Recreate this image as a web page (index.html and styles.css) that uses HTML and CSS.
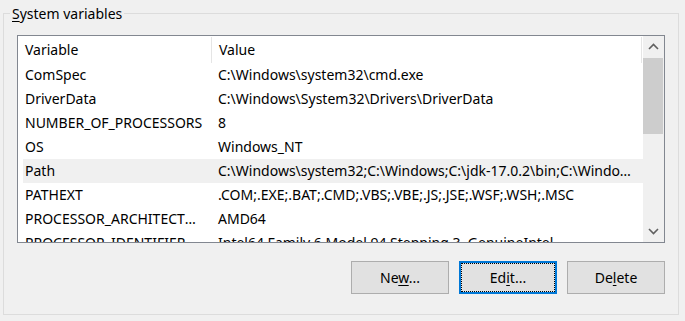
FILE: index.html
```html
<!DOCTYPE html>
<html>
<head>
    <title>System variables</title>
    <link rel="stylesheet" href="styles.css">
</head>
<body>
    <fieldset class="group">
        <legend><u>S</u>ystem variables</legend>
        <div class="listview">
            <div class="list">
                <div class="header">
                    <div class="hcol first">Variable</div>
                    <div class="hcol second">Value</div>
                </div>
                <div class="row"><span class="name">ComSpec</span><span class="value">C:\Windows\system32\cmd.exe</span></div>
                <div class="row"><span class="name">DriverData</span><span class="value">C:\Windows\System32\Drivers\DriverData</span></div>
                <div class="row"><span class="name">NUMBER_OF_PROCESSORS</span><span class="value">8</span></div>
                <div class="row"><span class="name">OS</span><span class="value">Windows_NT</span></div>
                <div class="row hot"><span class="name">Path</span><span class="value">C:\Windows\system32;C:\Windows;C:\jdk-17.0.2\bin;C:\Windows\System32\Wbem;C:\Windows\System32\WindowsPowerShell\v1.0\</span></div>
                <div class="row"><span class="name">PATHEXT</span><span class="value">.COM;.EXE;.BAT;.CMD;.VBS;.VBE;.JS;.JSE;.WSF;.WSH;.MSC</span></div>
                <div class="row"><span class="name">PROCESSOR_ARCHITECTURE</span><span class="value">AMD64</span></div>
                <div class="row"><span class="name">PROCESSOR_IDENTIFIER</span><span class="value">Intel64 Family 6 Model 94 Stepping 3, GenuineIntel</span></div>
            </div>
            <div class="scrollbar">
                <div class="arrow">
                    <svg width="11" height="7" viewBox="0 0 11 7"><path d="M1 6 L5.5 1.5 L10 6" fill="none" stroke="#606060" stroke-width="1.6"/></svg>
                </div>
                <div class="track"><div class="thumb"></div></div>
                <div class="arrow">
                    <svg width="11" height="7" viewBox="0 0 11 7"><path d="M1 1 L5.5 5.5 L10 1" fill="none" stroke="#606060" stroke-width="1.6"/></svg>
                </div>
            </div>
        </div>
        <div class="buttons">
            <button type="button">Ne<u>w</u>...</button>
            <button type="button" class="default">Ed<u>i</u>t...</button>
            <button type="button">De<u>l</u>ete</button>
        </div>
    </fieldset>
</body>
</html>
```

FILE: styles.css
```css
body {
    font-family: "Noto Sans", sans-serif;
    font-size: 14px;
    margin: 0;
    background-color: #f0f0f0;
    color: #000000;
}

.group {
    margin: 4px 6px 0 3px;
    padding: 0 13px 20px 13px;
    border: 1px solid #dcdcdc;
    min-width: 0;
}

.group legend {
    margin-left: -7px;
    padding: 0 2px;
    line-height: 19px;
}

.group u {
    text-underline-offset: 2px;
}

.listview {
    display: flex;
    margin-top: 12px;
    height: 208px;
    box-sizing: border-box;
    border: 1px solid #828790;
    background-color: #ffffff;
}

.list {
    flex: 1;
    overflow: hidden;
    min-width: 0;
}

.header {
    display: flex;
    height: 27px;
}

.hcol {
    box-sizing: border-box;
    height: 26px;
    margin-top: 1px;
    line-height: 25px;
    padding-left: 7px;
    border-right: 1px solid #e5e5e5;
}

.hcol.first {
    width: 194px;
}

.hcol.second {
    width: 430px;
}

.row {
    display: flex;
    height: 24px;
    line-height: 24px;
    margin-left: 5px;
    white-space: nowrap;
}

.row.hot {
    background-color: #f0f0f0;
}

.name {
    box-sizing: border-box;
    width: 188px;
    padding: 0 6px 0 2px;
    overflow: hidden;
    text-overflow: ellipsis;
}

.value {
    flex: 1;
    min-width: 0;
    padding: 0 6px 0 7px;
    overflow: hidden;
    text-overflow: ellipsis;
}

.scrollbar {
    width: 21px;
    display: flex;
    flex-direction: column;
    background-color: #f0f0f0;
}

.arrow {
    height: 21px;
    display: flex;
    align-items: center;
    justify-content: center;
}

.track {
    flex: 1;
}

.thumb {
    margin: 1px 1px 0 0;
    height: 76px;
    background-color: #cdcdcd;
}

.buttons {
    display: flex;
    justify-content: flex-end;
    gap: 10px;
    margin-top: 18px;
}

button {
    width: 98px;
    height: 33px;
    box-sizing: border-box;
    font-family: inherit;
    font-size: 14px;
    color: #000000;
    background-color: #e1e1e1;
    border: 1px solid #adadad;
    padding: 0;
}

button.default {
    border: 2px solid #0078d7;
    outline: 1px dotted #000000;
    outline-offset: -3px;
}
```
